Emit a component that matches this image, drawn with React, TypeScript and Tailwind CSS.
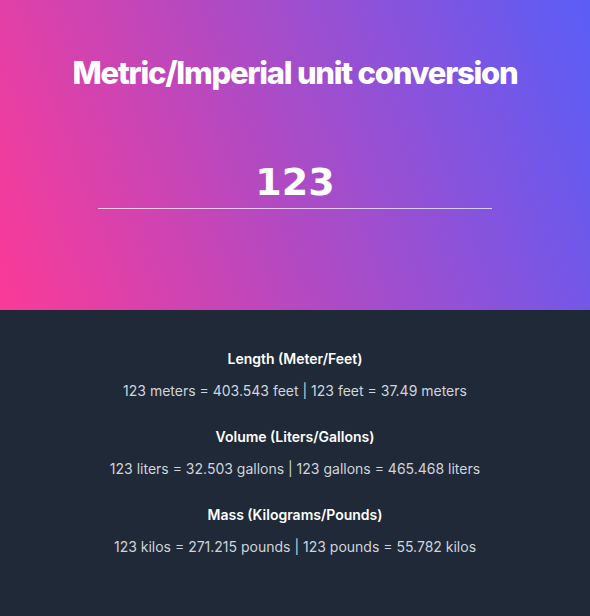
import React, { useState } from 'react';

const App: React.FC = () => {
  const [value, setValue] = useState('123');

  const rows = [
    {
      title: 'Length (Meter/Feet)',
      text: `${value} meters = 403.543 feet | ${value} feet = 37.49 meters`,
    },
    {
      title: 'Volume (Liters/Gallons)',
      text: `${value} liters = 32.503 gallons | ${value} gallons = 465.468 liters`,
    },
    {
      title: 'Mass (Kilograms/Pounds)',
      text: `${value} kilos = 271.215 pounds | ${value} pounds = 55.782 kilos`,
    },
  ];

  return (
    <div className="w-[590px] h-[616px] flex flex-col font-['Inter',sans-serif]">
      {/* Top */}
      <div className="h-[310px] bg-[linear-gradient(70deg,#fb3a97,#5a5df7)] flex flex-col items-center pt-[54px]">
        <h1 className="text-[31px] leading-[38px] font-extrabold tracking-[-0.04em] text-white">
          Metric/Imperial unit conversion
        </h1>
        <input
          value={value}
          onChange={(e) => setValue(e.target.value)}
          className="mt-[66px] w-[394px] pb-[2px] bg-transparent text-center text-white text-[38px] leading-[48px] font-bold font-['DejaVu_Sans',sans-serif] border-b border-white/70 outline-none"
        />
      </div>

      {/* Results */}
      <div className="flex-1 bg-[#1f2937] flex flex-col items-center pt-[39px] gap-[26px]">
        {rows.map((r) => (
          <div key={r.title} className="flex flex-col items-center gap-[12px]">
            <h2 className="text-[14px] leading-[20px] font-semibold text-white">{r.title}</h2>
            <p className="text-[14px] leading-[20px] text-[#d1d5db]">{r.text}</p>
          </div>
        ))}
      </div>
    </div>
  );
};

export default App;
